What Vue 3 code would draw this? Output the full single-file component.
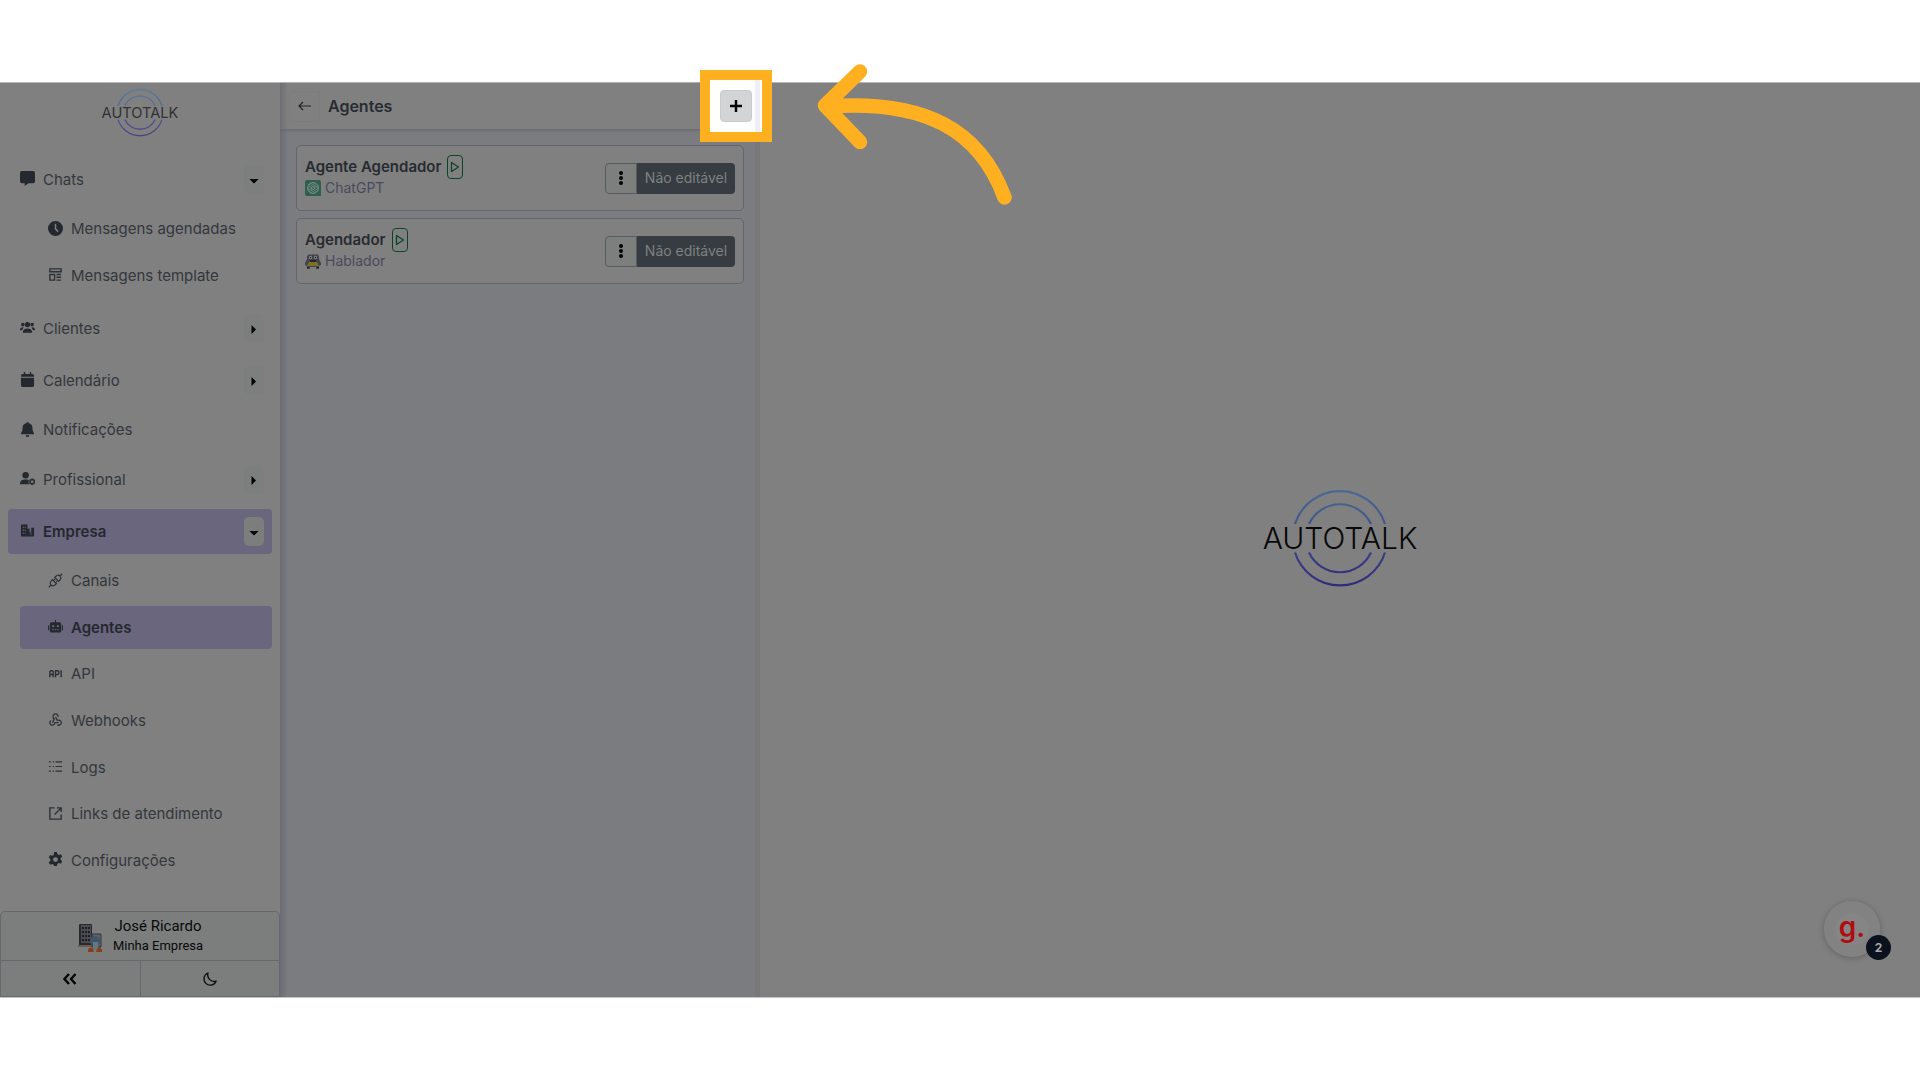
<script setup>
import { ref } from 'vue'

const fill = (d) => ({ d, fill: true })
const line = (d, w = 1.5) => ({ d, fill: false, w })

const icons = {
  chat: [fill('M2 0h12a2 2 0 0 1 2 2v9a2 2 0 0 1-2 2H9l-4 3v-3H2a2 2 0 0 1-2-2V2a2 2 0 0 1 2-2z')],
  clock: [fill('M8 0a8 8 0 1 0 0 16A8 8 0 0 0 8 0zM7.2 3h1.6v5.1l2.6 2.6-1.2 1.2-3-3z')],
  template: [line('M2 2h12v3H2zM2 8h5v6H2zM9 8h5M9 11h5M9 14h5', 1.5)],
  users: [fill('M8 2a2.9 2.9 0 1 0 0 5.8a2.9 2.9 0 0 0 0-5.8zM3 3a1.9 1.9 0 1 0 0 3.8a1.9 1.9 0 0 0 0-3.8zM13 3a1.9 1.9 0 1 0 0 3.8a1.9 1.9 0 0 0 0-3.8zM8 9c3 0 5 1.5 5 4.500H3C3 10.500 5 9 8 9zM0 11c0-2 1-3.400 3.800-3.200L2.200 11zM16 11c0-2-1-3.400-3.800-3.200l1.600 3.200z')],
  calendar: [fill('M1 4a2 2 0 0 1 2-2h1V0h1.600v2h4.800V0H12v2h1a2 2 0 0 1 2 2v1H1zM1 6h14v8a2 2 0 0 1-2 2H3a2 2 0 0 1-2-2z')],
  bell: [fill('M7 1a1 1 0 0 1 2 0c3 .6 4.300 2.700 4.300 5.500 0 3 .7 4 1.700 5.500v1H1v-1c1-1.500 1.700-2.500 1.700-5.500C2.700 3.700 4 1.600 7 1zM6 14h4a2 2 0 0 1-4 0z')],
  userCog: [
    fill('M6 1a3.500 3.500 0 1 0 0 7a3.500 3.500 0 0 0 0-7zM0 14c0-3.500 2-5 5-5h2.500c.8 0 1.500.2 2 .5-.6 1.500-.5 3 .5 4.500z'),
    line('M13 8.800l2.200 1.200v2.800L13 14l-2.200-1.200V10z', 1.9)
  ],
  building: [fill('M1 1.500h7V6h2.200v4H12V5h3v9.500H1zM3 4v1.400h1V4zM5 4v1.400h1V4zM3 7v1.400h1V7zM5 7v1.400h1V7zM3 10v1.400h1V10zM5 10v1.400h1V10zM11 11v1.500h1V11z')],
  plug: [line('M.8 15.200l2.700-2.700M3.200 12.800c-1.700-1.700-.8-3.500 1.500-5.700l4.200 4.200c-2.200 2.300-4 3.200-5.700 1.500zM7.200 4.700c2.200-2.300 4-3.200 5.700-1.500s.8 3.500-1.500 5.700zM12.800 3.200L15.200.8M5.800 8l1.600-1.600M8 10.200l1.600-1.600', 1.2)],
  robot: [fill('M7.400 1h1.200v2.500H12a2 2 0 0 1 2 2V13a1.500 1.500 0 0 1-1.500 1.500h-9A1.500 1.500 0 0 1 2 13V5.500a2 2 0 0 1 2-2h3.400zM0 7h1.200v5H0zM14.800 7H16v5h-1.200zM5.500 6.500a1.200 1.200 0 1 0 0 2.400a1.200 1.200 0 0 0 0-2.400zM10.500 6.500a1.200 1.200 0 1 0 0 2.400a1.200 1.200 0 0 0 0-2.400zM4.500 11v1h1.700v-1zM7.100 11v1h1.700v-1zM9.700 11v1h1.700v-1z')],
  api: [line('M2 12V6l1-1h1.500l1 1v6M2 9h3.500M8 12V5h2.500l1 1v2l-1 1H8M14 4.500V12', 1.5)],
  webhook: [line('M3.200 9a2.700 2.700 0 1 0 4.100 2.300h4M10 13.700a2.700 2.700 0 1 0 1.300-5c-.5 0-.9.1-1.300.3L8 5.300M10.700 5.300a2.700 2.700 0 1 0-5.300 0c0 1 .5 1.900 1.300 2.300l-2 3.700', 1.4)],
  list: [line('M1 3h2M1 8h2M1 13h2M5 3h1.500M5 8h1.500M5 13h1.500M8 3h7M8 8h7M8 13h7', 1.3)],
  external: [line('M7 2H2v12h12V9M9.500 2H14v4.500M14 2L7 9', 1.5)],
  gear: [fill('M6.500 0h3l.5 2.200 1.500.9 2.200-.8 1.500 2.600-1.700 1.600v1.800l1.700 1.600-1.500 2.600-2.200-.7-1.500.9-.5 2.300h-3L6 13.700l-1.500-.9-2.200.7-1.500-2.600 1.700-1.600V7.500L.8 5.900l1.500-2.600 2.200.8L6 3.200zM8 5.500a2.600 2.600 0 1 0 0 5.200a2.600 2.600 0 0 0 0-5.200z')]
}

const menu = ref([
  { label: 'Chats', icon: 'chat', toggle: true, open: true, items: [
    { label: 'Mensagens agendadas', icon: 'clock' },
    { label: 'Mensagens template', icon: 'template' }
  ] },
  { label: 'Clientes', icon: 'users', toggle: true },
  { label: 'Calendário', icon: 'calendar', toggle: true },
  { label: 'Notificações', icon: 'bell' },
  { label: 'Profissional', icon: 'userCog', toggle: true },
  { label: 'Empresa', icon: 'building', toggle: true, open: true, active: true, items: [
    { label: 'Canais', icon: 'plug' },
    { label: 'Agentes', icon: 'robot', active: true },
    { label: 'API', icon: 'api' },
    { label: 'Webhooks', icon: 'webhook' },
    { label: 'Logs', icon: 'list' },
    { label: 'Links de atendimento', icon: 'external' },
    { label: 'Configurações', icon: 'gear' }
  ] }
])

const agents = [
  { name: 'Agente Agendador', source: 'ChatGPT' },
  { name: 'Agendador', source: 'Hablador' }
]

const rings = 'M37 34a47.200 47.200 0 0 1 90 0M51 34a34.200 34.200 0 0 1 62 0M37 62.500a47.200 47.200 0 0 0 90 0M51 62.500a34.200 34.200 0 0 0 62 0'
</script>

<template>
  <div class="page">
    <div class="stage">
      <aside class="sidebar">
        <a href="#" class="brand" aria-label="Autotalk">
          <svg width="80" height="49" viewBox="0 0 164 100">
            <defs>
              <linearGradient id="ring-small" x1="0" y1="0" x2="0" y2="100" gradientUnits="userSpaceOnUse">
                <stop offset="0" stop-color="#5c7b9c" />
                <stop offset="1" stop-color="#4b4180" />
              </linearGradient>
            </defs>
            <path :d="rings" fill="none" stroke="url(#ring-small)" stroke-width="3" />
            <text x="82" y="59" text-anchor="middle" class="wordmark small">AUTOTALK</text>
          </svg>
        </a>

        <nav class="nav">
          <div v-for="group in menu" :key="group.label" class="group">
            <div class="head" :class="{ active: group.active, plain: !group.toggle }">
              <a href="#" class="link">
                <svg class="icon" viewBox="0 0 16 16">
                  <path v-for="(p, i) in icons[group.icon]" :key="i" :d="p.d" :class="p.fill ? 'solid' : 'stroke'" :stroke-width="p.w" />
                </svg>
                <span>{{ group.label }}</span>
              </a>
              <button v-if="group.toggle" type="button" class="toggle" :aria-label="'Alternar ' + group.label" @click="group.open = !group.open">
                <svg width="10" height="10" viewBox="0 0 10 10">
                  <path :d="group.open ? 'M.5 4h9L5 8.500z' : 'M2.500 1v9L7 5.500z'" />
                </svg>
              </button>
            </div>
            <ul v-if="group.items && group.open" class="sub" :class="{ long: group.items.length > 2 }">
              <li v-for="item in group.items" :key="item.label">
                <a href="#" class="link sublink" :class="{ active: item.active }">
                  <svg class="icon" viewBox="0 0 16 16">
                    <path v-for="(p, i) in icons[item.icon]" :key="i" :d="p.d" :class="p.fill ? 'solid' : 'stroke'" :stroke-width="p.w" />
                  </svg>
                  <span>{{ item.label }}</span>
                </a>
              </li>
            </ul>
          </div>
        </nav>

        <div class="account">
          <button type="button" class="user">
            <svg width="26" height="32" viewBox="0 0 26 32">
              <rect x="2" y="4" width="13" height="22" rx="1" fill="#29282e" />
              <rect x="4" y="5" width="10" height="18" fill="#4d4b52" />
              <path d="M5 8h8M5 12h8M5 16h8M5 20h8" stroke="#1e1e24" stroke-width="2" stroke-dasharray="2 1" />
              <rect x="1" y="25" width="15" height="2" fill="#6b5c50" />
              <path d="M15 14h9v13h-9z" fill="#5c626d" stroke="#34363f" />
              <circle cx="18" cy="21" r="5" fill="#3f5666" />
              <path d="M16 22h5v8h-5z" fill="#66767e" />
              <path d="M11 30c1-3 4-3 5-1l1 3h-6zM25 30c-1-3-4-3-5-1l-1 3h6z" fill="#873f18" />
            </svg>
            <span class="who">
              <span class="name">José Ricardo</span>
              <span class="company">Minha Empresa</span>
            </span>
          </button>
          <div class="tools">
            <button type="button" aria-label="Recolher menu">
              <svg width="14" height="12" viewBox="0 0 14 12"><path d="M6 1L1.500 6 6 11M12.500 1L8 6l4.500 5" fill="none" stroke="#050505" stroke-width="2.400" /></svg>
            </button>
            <button type="button" aria-label="Modo escuro">
              <svg width="14" height="14" viewBox="0 0 14 14"><path d="M5 1a6.300 6.300 0 1 0 8.200 8C8.500 10.500 3.500 6.500 5 1z" fill="none" stroke="#0a0a0a" stroke-width="1.300" stroke-linejoin="round" /></svg>
            </button>
          </div>
        </div>
      </aside>

      <section class="panel">
        <header class="bar">
          <button type="button" class="back" aria-label="Voltar">
            <svg width="14" height="10" viewBox="0 0 14 10"><path d="M5 1L1 5l4 4M1 5h12" fill="none" stroke="#202327" stroke-width="1.200" /></svg>
          </button>
          <h1>Agentes</h1>
          <div class="spot">
            <div class="ring"></div>
            <button type="button" class="add" aria-label="Adicionar agente">
              <svg width="12" height="12" viewBox="0 0 12 12"><path d="M6 0v12M0 6h12" stroke="#050505" stroke-width="2.400" /></svg>
            </button>
            <svg class="pointer" width="200" height="150" viewBox="815 60 200 150">
              <path d="M860 71.500L825 105.500l35 36.500M826 106.500C925 99 980 130 1004.500 197.500" />
            </svg>
          </div>
        </header>

        <div class="cards">
          <article v-for="(agent, i) in agents" :key="agent.name" class="card">
            <div class="info">
              <div class="title">
                <h2>{{ agent.name }}</h2>
                <button type="button" class="play" :aria-label="'Iniciar ' + agent.name">
                  <svg width="10" height="12" viewBox="0 0 10 12"><path d="M1.500 1.500v9L8.500 6z" fill="none" stroke="#0c4429" stroke-width="1.300" stroke-linejoin="round" /></svg>
                </button>
              </div>
              <p class="source">
                <svg v-if="i === 0" width="16" height="16" viewBox="0 0 16 16">
                  <path d="M2 0h12a2 2 0 0 1 2 2v14H2a2 2 0 0 1-2-2V2a2 2 0 0 1 2-2z" fill="#315f4f" />
                  <g fill="none" stroke="#7c8f88" stroke-width=".8">
                    <path d="M8 2.500l3 1.700v3.600L8 9.500M12.800 5.200v3.500l-3 1.800L6.700 8.700M12.800 10.800l-3 1.700-3.100-1.700V7.300M8 13.500l-3-1.700V8.200L8 6.500M3.200 10.800V7.300l3-1.800 3.100 1.800M3.200 5.200l3-1.700 3.100 1.700v3.500" />
                    <circle cx="8" cy="8" r="5.500" />
                  </g>
                </svg>
                <svg v-else width="16" height="16" viewBox="0 0 16 16">
                  <path d="M2 6V3l2-2 2 1 2-1 2 1 2-1 2 2v3l2 4v2l-2 1v3h-3v-2H5v2H2v-3l-2-1v-2z" fill="#44444d" />
                  <path d="M4 3h3v3H4zM9 3h3v3H9z" fill="#777780" />
                  <path d="M5 7h6v2H5z" fill="#25252e" />
                  <path d="M4 9h8l2 4H2z" fill="#7b7224" />
                  <path d="M5 4h1v1H5zM10 4h1v1h-1zM2 14h2v1H2zM12 14h2v1h-2z" fill="#1e1e25" />
                </svg>
                <span>{{ agent.source }}</span>
              </p>
            </div>
            <div class="actions">
              <button type="button" class="more" :aria-label="'Opções de ' + agent.name">
                <svg width="4" height="14" viewBox="0 0 4 14"><circle cx="2" cy="2" r="2" /><circle cx="2" cy="7" r="2" /><circle cx="2" cy="12" r="2" /></svg>
              </button>
              <button type="button" class="locked">Não editável</button>
            </div>
          </article>
        </div>
      </section>

      <main class="main">
        <svg width="164" height="100" viewBox="0 0 164 100" role="img" aria-label="Autotalk">
          <defs>
            <linearGradient id="ring-large" x1="0" y1="0" x2="0" y2="100" gradientUnits="userSpaceOnUse">
              <stop offset="0" stop-color="#4a6a92" />
              <stop offset="1" stop-color="#30287a" />
            </linearGradient>
          </defs>
          <path :d="rings" fill="none" stroke="url(#ring-large)" stroke-width="2.200" />
          <text x="82" y="59" text-anchor="middle" class="wordmark">AUTOTALK</text>
        </svg>

        <button type="button" class="widget" aria-label="Guias">
          <span class="g">g.</span>
          <span class="count">2</span>
        </button>
      </main>
    </div>
  </div>
</template>

<style>
body {
  background: #fff;
}
</style>

<style scoped>
* {
  box-sizing: border-box;
}
.page {
  display: flex;
  flex-direction: column;
  min-height: 100vh;
  padding: 82px 0;
  font-family: Inter, "Liberation Sans", sans-serif;
  font-size: 15px;
  line-height: 20px;
  color: #33373d;
}
button {
  display: flex;
  align-items: center;
  justify-content: center;
  padding: 0;
  border: 0;
  background: none;
  font: inherit;
  color: inherit;
  cursor: pointer;
}
a {
  color: inherit;
  text-decoration: none;
}
.stage {
  flex: 1;
  display: flex;
  border-top: 1px solid #b8b8b8;
  border-bottom: 1px solid #c4c4c4;
  background: #808080;
}
.sidebar {
  position: relative;
  z-index: 3;
  flex: none;
  display: flex;
  flex-direction: column;
  width: 280px;
  background: #808080;
}
.sidebar::after {
  content: "";
  position: absolute;
  top: 0;
  bottom: 0;
  left: 100%;
  width: 8px;
  background: linear-gradient(90deg, rgba(70, 68, 95, 0.3), rgba(70, 68, 95, 0));
}
.brand {
  display: flex;
  justify-content: center;
  height: 74px;
  padding-top: 6px;
}
.wordmark {
  font-size: 30px;
  font-weight: 300;
  fill: #080808;
}
.wordmark.small {
  font-weight: 400;
  fill: #303234;
}
.nav {
  display: flex;
  flex-direction: column;
  gap: 7px;
  padding: 0 8px;
}
.head {
  display: flex;
  align-items: center;
  height: 45px;
  padding: 0 8px 0 12px;
  border-radius: 4px;
}
.head.plain {
  height: 40px;
}
.active {
  background: #69667e;
  color: #25282e;
  font-weight: 600;
}
.link {
  flex: 1;
  display: flex;
  align-items: center;
  gap: 8px;
}
.icon {
  flex: none;
  width: 15px;
  height: 15px;
  margin-bottom: 2px;
}
.solid {
  fill: #23292f;
  fill-rule: evenodd;
}
.stroke {
  fill: none;
  stroke: #2b3036;
}
.toggle {
  width: 20px;
  height: 29px;
  border-radius: 5px;
  background: #7d7f7f;
}
.active .toggle {
  background: #7c7e7e;
}
.sub {
  display: grid;
  grid-auto-rows: 1fr;
  min-height: 93px;
  margin: 4px 0 0 12px;
  padding: 0;
  list-style: none;
}
.sub.long {
  min-height: 326px;
}
.sub li {
  display: flex;
  align-items: center;
}
.sublink {
  height: 43px;
  padding-left: 28px;
  border-radius: 4px;
}
.account {
  display: flex;
  flex-direction: column;
  margin-top: auto;
  border: 1px solid #65696f;
  border-radius: 5px 5px 0 0;
  background: #7c7e7e;
  color: #08090a;
}
.user {
  gap: 10px;
  height: 48px;
}
.who {
  display: flex;
  flex-direction: column;
  align-items: center;
  font-family: Roboto, sans-serif;
}
.name {
  font-size: 15px;
}
.company {
  font-size: 13px;
}
.tools {
  display: flex;
  border-top: 1px solid #65696f;
}
.tools button {
  flex: 1;
  height: 35px;
}
.tools button + button {
  border-left: 1px solid #65696f;
}
.panel {
  flex: none;
  width: 480px;
  border-right: 5px solid #77777c;
  background: #7b7c7f;
}
.bar {
  position: relative;
  z-index: 2;
  display: flex;
  align-items: center;
  gap: 8px;
  height: 46px;
  padding: 0 3px 0 9px;
  background: #808080;
  box-shadow: 0 1px 3px rgba(60, 62, 80, 0.35);
}
.back {
  width: 31px;
  height: 31px;
  border: 1px solid #7d7d7d;
  border-radius: 4px;
}
h1 {
  flex: 1;
  margin: 0;
  font-size: 16px;
  line-height: 24px;
  font-weight: 600;
  color: #282c32;
}
.spot {
  position: relative;
}
.ring {
  position: absolute;
  inset: -20px;
  border: 10px solid #ffb020;
  background: linear-gradient(90deg, #fff 45px, #f0eff7 45px, #f0eff7 50px, #fff 50px);
}
.add {
  position: relative;
  width: 32px;
  height: 32px;
  border: 1px solid #c9cbcd;
  border-radius: 4px;
  background: #d3d4d5;
}
.pointer {
  position: absolute;
  left: 95px;
  top: -30px;
  fill: none;
  stroke: #ffb020;
  stroke-width: 14.5;
  stroke-linecap: round;
  stroke-linejoin: round;
  pointer-events: none;
}
.cards {
  display: flex;
  flex-direction: column;
  gap: 7px;
  padding: 16px 11px 16px 16px;
}
.card {
  display: flex;
  align-items: center;
  justify-content: space-between;
  min-height: 66px;
  padding: 0 8px;
  border: 1px solid #62666d;
  border-radius: 5px;
  background: #808080;
}
.info {
  align-self: flex-start;
  display: flex;
  flex-direction: column;
  padding-top: 9px;
}
.title {
  display: flex;
  align-items: center;
  gap: 6px;
}
h2 {
  margin: 0;
  font-size: 15px;
  line-height: 22px;
  font-weight: 600;
  color: #272b31;
}
.play {
  width: 16px;
  height: 24px;
  border: 1px solid #0c4429;
  border-radius: 4px;
}
.source {
  display: flex;
  align-items: center;
  gap: 4px;
  margin: 0;
  font-size: 14px;
  line-height: 18px;
  color: #4a4a5c;
}
.actions {
  display: flex;
  height: 31px;
}
.more {
  width: 32px;
  border: 1px solid #555b60;
  border-radius: 4px 0 0 4px;
  background: #7d7f7f;
}
.locked {
  width: 98px;
  border-radius: 0 4px 4px 0;
  background: #363c41;
  color: #7f8081;
  font-size: 14px;
}
.main {
  position: relative;
  flex: 1;
  display: flex;
  align-items: center;
  justify-content: center;
  background: #808080;
}
.widget {
  position: absolute;
  right: 40px;
  bottom: 40px;
  width: 56px;
  height: 56px;
  border-radius: 50%;
  background: radial-gradient(circle, #858585 16px, #828282 17px);
  box-shadow: 0 1px 6px rgba(0, 0, 0, 0.25);
}
.g {
  padding-bottom: 4px;
  font-size: 28px;
  line-height: 32px;
  font-weight: 600;
  color: #b00c10;
}
.count {
  position: absolute;
  right: -11px;
  bottom: -3px;
  width: 25px;
  height: 25px;
  border-radius: 50%;
  background: #0b121e;
  color: #a5a7aa;
  font-size: 12px;
  line-height: 25px;
  font-weight: 700;
  text-align: center;
}
</style>
